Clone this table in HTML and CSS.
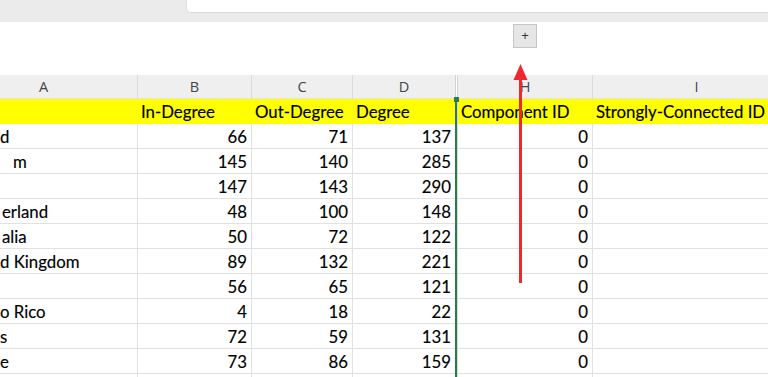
FILE: index.html
```html
<!DOCTYPE html>
<html lang="en">
<head>
<meta charset="utf-8">
<title>Sheet</title>
<link rel="stylesheet" href="styles.css">
</head>
<body>
<div class="app">
  <div class="topbar"><div class="searchbox"></div></div>
  <div class="toolbar"><button class="plus">+</button></div>
  <div class="sheet">
    <div class="row head">
      <div class="c">A</div><div class="c">B</div><div class="c">C</div><div class="c">D</div><div class="sep"></div><div class="c">H</div><div class="c">I</div>
    </div>
    <div class="row yellow">
      <div class="c"></div><div class="c">In-Degree</div><div class="c">Out-Degree</div><div class="c">Degree</div><div class="sep"></div><div class="c">Component ID</div><div class="c">Strongly-Connected ID</div>
    </div>
    <div class="row data"><div class="c t">d</div><div class="c n">66</div><div class="c n">71</div><div class="c n">137</div><div class="sep"></div><div class="c n">0</div><div class="c"></div></div>
    <div class="row data"><div class="c t ind">m</div><div class="c n">145</div><div class="c n">140</div><div class="c n">285</div><div class="sep"></div><div class="c n">0</div><div class="c"></div></div>
    <div class="row data"><div class="c t"></div><div class="c n">147</div><div class="c n">143</div><div class="c n">290</div><div class="sep"></div><div class="c n">0</div><div class="c"></div></div>
    <div class="row data"><div class="c t sm">erland</div><div class="c n">48</div><div class="c n">100</div><div class="c n">148</div><div class="sep"></div><div class="c n">0</div><div class="c"></div></div>
    <div class="row data"><div class="c t sm">alia</div><div class="c n">50</div><div class="c n">72</div><div class="c n">122</div><div class="sep"></div><div class="c n">0</div><div class="c"></div></div>
    <div class="row data"><div class="c t">d Kingdom</div><div class="c n">89</div><div class="c n">132</div><div class="c n">221</div><div class="sep"></div><div class="c n">0</div><div class="c"></div></div>
    <div class="row data"><div class="c t"></div><div class="c n">56</div><div class="c n">65</div><div class="c n">121</div><div class="sep"></div><div class="c n">0</div><div class="c"></div></div>
    <div class="row data"><div class="c t">o Rico</div><div class="c n">4</div><div class="c n">18</div><div class="c n">22</div><div class="sep"></div><div class="c n">0</div><div class="c"></div></div>
    <div class="row data"><div class="c t">s</div><div class="c n">72</div><div class="c n">59</div><div class="c n">131</div><div class="sep"></div><div class="c n">0</div><div class="c"></div></div>
    <div class="row data"><div class="c t">e</div><div class="c n">73</div><div class="c n">86</div><div class="c n">159</div><div class="sep"></div><div class="c n">0</div><div class="c"></div></div>
    <div class="row data"><div class="c t"></div><div class="c n"></div><div class="c n"></div><div class="c n"></div><div class="sep"></div><div class="c n"></div><div class="c"></div></div>
  </div>
  <div class="sel-handle"></div>
  <svg class="arrow" width="20" height="225" viewBox="0 0 20 225">
    <rect x="6" y="14" width="3" height="205" fill="#ee2730"/>
    <polygon points="7.5,0 0.5,16 14.5,16" fill="#ee2730"/>
  </svg>
</div>
</body>
</html>
```

FILE: styles.css
```css
* { box-sizing: border-box; margin: 0; padding: 0; }
html, body { width: 768px; height: 377px; overflow: hidden; background: #fff; }
body { font-family: "Lato", "Liberation Sans", sans-serif; color: #000; }

.app { position: relative; width: 768px; height: 377px; overflow: hidden; }

.topbar { height: 22px; background: #ebebeb; display: flex; }
.searchbox {
  margin-left: 186px; flex: 1; height: 13px; background: #fff;
  border-bottom-left-radius: 5px;
  border-bottom: 1px solid #d8d8d8; border-left: 1px solid #dedede;
}

.toolbar { height: 53px; padding: 2px 0 0 513px; }
.plus {
  width: 24px; height: 24px; background: #e6e6e6; border: 1px solid #c4c4c4;
  font-family: "Liberation Sans", sans-serif; font-size: 13px; color: #333;
  line-height: 20px; text-align: center;
}

.sheet { margin-left: -50px; }
.row {
  display: grid;
  grid-template-columns: 188px 114px 101px 102px 3px 135px 208px;
  height: 25px;
}
.c {
  border-right: 1px solid #e1e1e1; border-bottom: 1px solid #e1e1e1;
  font-size: 16.8px; line-height: 25px; white-space: nowrap; overflow: hidden;
  padding: 0 3px; -webkit-text-stroke: 0.15px #000;
}
.head { height: 24px; background: #efefef; }
.head .c {
  text-align: center; color: #444; font-family: "Open Sans", sans-serif; -webkit-text-stroke: 0;
  font-size: 14.5px; line-height: 23px; border-right-color: #dadada; border-bottom: 1px solid #e4e4e4;
}
.head .sep { background: linear-gradient(to right, #d2d2d2 0 1px, #fff 1px 2px, #d2d2d2 2px 3px); }
.head .c:nth-child(4) { border-right: none; }

.yellow .c { background: #ffff00; border-right-color: #ffff00; border-bottom: none; }
.yellow .c:nth-child(4) { border-right: none; }

.data .c:nth-child(4) { border-right: none; }
.data .c.n { text-align: right; padding-right: 4px; }
.data .c.t { padding-left: 50px; }
.data .c.t.ind { padding-left: 63px; }
.data .c.t.sm { padding-left: 52px; }

.yellow .sep, .data .sep { background: linear-gradient(to right, #2f7a4c 0 2px, #cfdfd4 2px 3px); }

.sel-handle {
  position: absolute; left: 454px; top: 97px; width: 5px; height: 5px; background: #2f7a4c;
}
.arrow { position: absolute; left: 513px; top: 64px; }
```
